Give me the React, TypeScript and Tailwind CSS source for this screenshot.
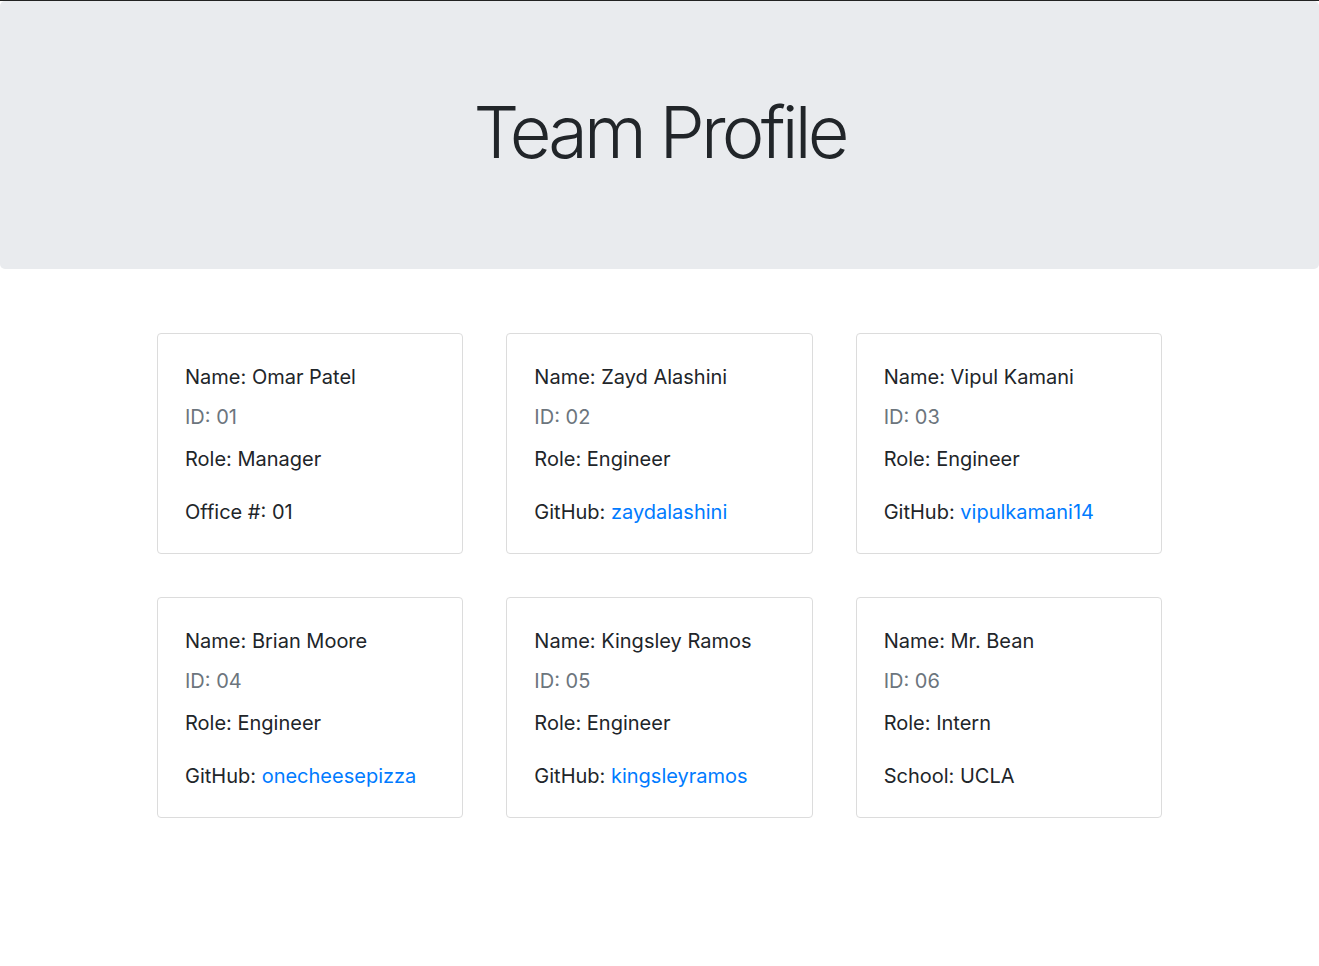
import React from "react";

type Member = {
  name: string;
  id: string;
  role: string;
  extraLabel: string;
  extra: string;
  link?: boolean;
};

const members: Member[] = [
  { name: "Omar Patel", id: "01", role: "Manager", extraLabel: "Office #:", extra: "01" },
  { name: "Zayd Alashini", id: "02", role: "Engineer", extraLabel: "GitHub:", extra: "zaydalashini", link: true },
  { name: "Vipul Kamani", id: "03", role: "Engineer", extraLabel: "GitHub:", extra: "vipulkamani14", link: true },
  { name: "Brian Moore", id: "04", role: "Engineer", extraLabel: "GitHub:", extra: "onecheesepizza", link: true },
  { name: "Kingsley Ramos", id: "05", role: "Engineer", extraLabel: "GitHub:", extra: "kingsleyramos", link: true },
  { name: "Mr. Bean", id: "06", role: "Intern", extraLabel: "School:", extra: "UCLA" },
];

function Card({ m }: { m: Member }) {
  return (
    <div className="border border-[#dcdcdc] rounded-[4px] bg-white pl-[27px] pr-4 pt-[31px] pb-[29px] text-[20px] leading-6 text-[#212529]">
      <div>Name: {m.name}</div>
      <div className="mt-4 text-[#6c757d]">ID: {m.id}</div>
      <div className="mt-[18px]">Role: {m.role}</div>
      <div className="mt-[29px]">
        {m.extraLabel}{" "}
        {m.link ? (
          <a className="text-[#007bff]" href="#">
            {m.extra}
          </a>
        ) : (
          m.extra
        )}
      </div>
    </div>
  );
}

export default function App() {
  return (
    <div className="min-h-[966px] bg-white" style={{ fontFamily: "Inter, 'Noto Sans', sans-serif" }}>
      <div className="h-px bg-[#222]" />
      <div className="bg-[#e9ebee] rounded-[5px] h-[268px] flex items-center justify-center">
        <h1 className="text-[72px] font-light leading-[86px] tracking-[-0.053em] text-[#212529] mb-[6px]">
          Team Profile
        </h1>
      </div>
      <div className="w-[1005px] mx-auto mt-[64px] grid grid-cols-3 gap-x-[43px] gap-y-[43px]">
        {members.map((m) => (
          <Card key={m.id} m={m} />
        ))}
      </div>
    </div>
  );
}
